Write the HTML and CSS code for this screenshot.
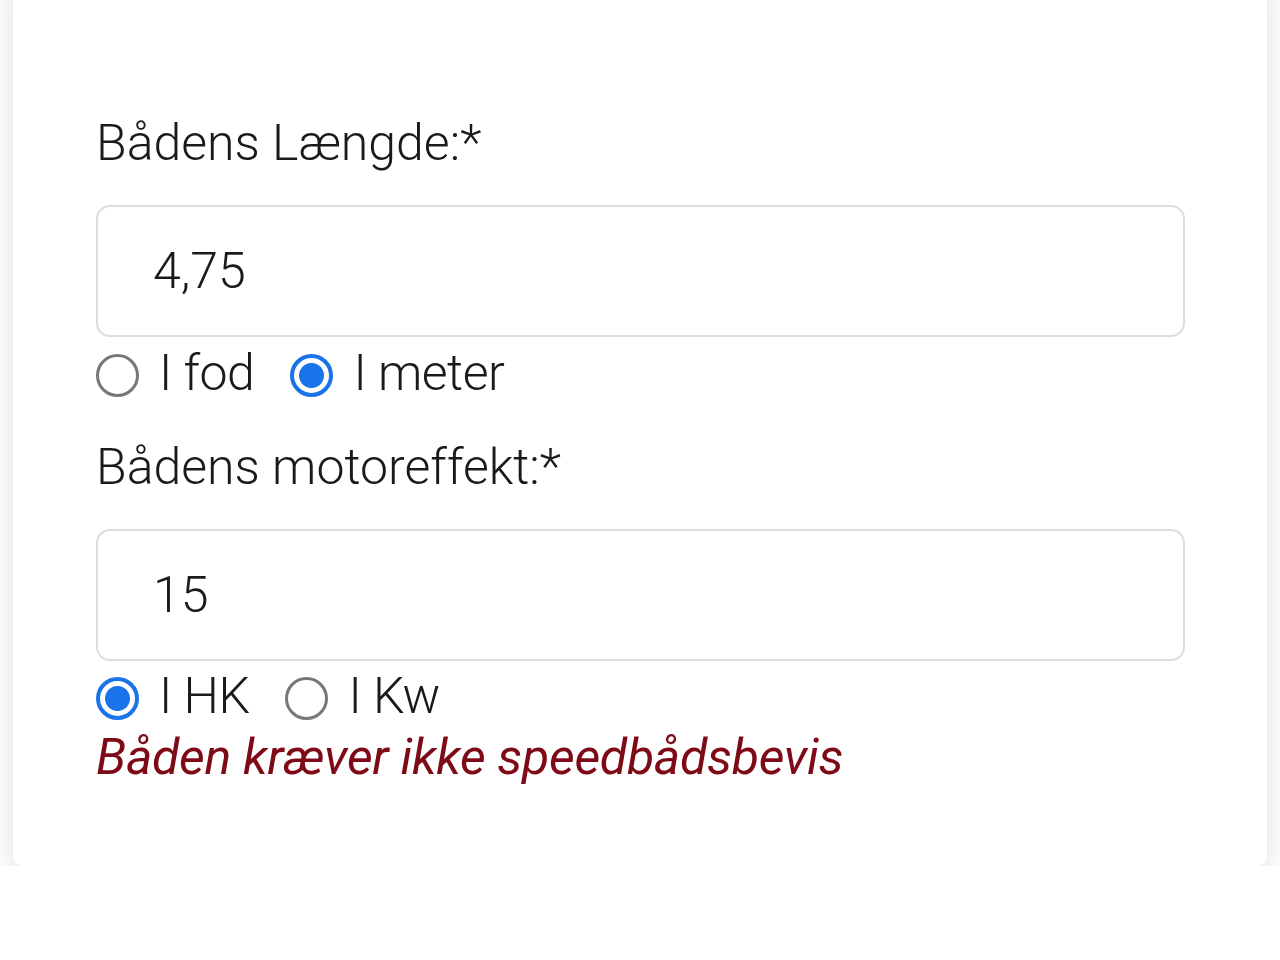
FILE: index.html
```html
<!DOCTYPE html>
<html lang="da">
<head>
<meta charset="utf-8">
<title>Båd</title>
<link rel="stylesheet" href="styles.css">
</head>
<body>
<div class="card">
  <div class="field-label">Bådens Længde:*</div>
  <div class="input"><span class="value">4,75</span></div>
  <div class="radios">
    <label class="radio"><span class="dot"></span><span class="rtext">I fod</span></label>
    <label class="radio checked"><span class="dot"></span><span class="rtext">I meter</span></label>
  </div>
  <div class="field-label second">Bådens motoreffekt:*</div>
  <div class="input"><span class="value">15</span></div>
  <div class="radios tight">
    <label class="radio checked"><span class="dot"></span><span class="rtext">I HK</span></label>
    <label class="radio"><span class="dot"></span><span class="rtext">I Kw</span></label>
  </div>
  <div class="notice">Båden kræver ikke speedbådsbevis</div>
</div>
</body>
</html>
```
FILE: styles.css
```css
html, body {
  margin: 0;
  padding: 0;
  background: #ffffff;
}
body {
  font-family: Roboto, "Liberation Sans", sans-serif;
  font-weight: 300;
  color: #1a1a1a;
  font-size: 50px;
  line-height: 60px;
}
.card {
  margin: -20px 13px 0 13px;
  padding: 133px 82px 79px 83px;
  background: #ffffff;
  border-radius: 10px;
  box-shadow: 0 6px 26px rgba(0, 0, 0, 0.14);
}
.field-label {
  height: 60px;
}
.field-label.second {
  margin-top: 34px;
}
.input {
  margin-top: 32px;
  height: 128px;
  border: 2px solid #dddddd;
  border-radius: 14px;
  padding-left: 55px;
  display: flex;
  align-items: center;
  box-sizing: content-box;
}
.radios {
  margin-top: 6px;
  display: flex;
  align-items: center;
  gap: 36px;
  height: 60px;
}
.radios.tight {
  margin-top: 5px;
}
.radio {
  display: flex;
  align-items: center;
  gap: 20px;
}
.rtext {
  letter-spacing: -0.5px;
}
.dot {
  width: 37px;
  height: 37px;
  border: 3px solid #777777;
  border-radius: 50%;
  box-sizing: content-box;
  background: #ffffff;
  margin-top: 4px;
}
.radio.checked .dot {
  border: 4px solid #1a73e8;
  width: 35px;
  height: 35px;
  background: radial-gradient(circle, #1a73e8 0 12px, #ffffff 13px);
}
.notice {
  margin-top: 1px;
  color: #7d0a16;
  font-style: italic;
  font-weight: 400;
  letter-spacing: -0.3px;
}
```
